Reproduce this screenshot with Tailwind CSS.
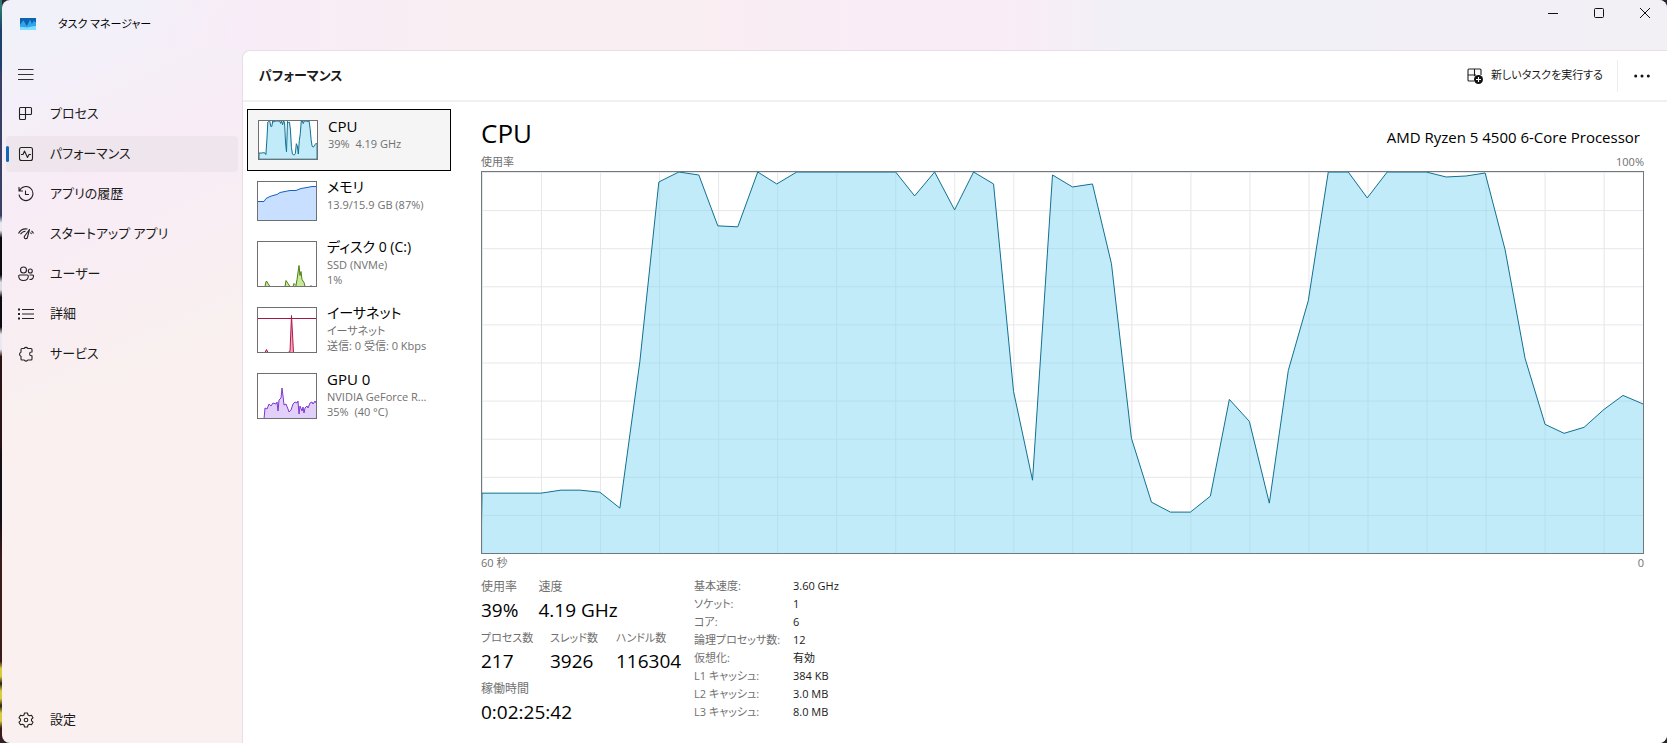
<!DOCTYPE html>
<html lang="ja">
<head>
<meta charset="utf-8">
<meta name="viewport" content="width=device-width, initial-scale=1">
<title>タスク マネージャー</title>
<script src="https://cdn.jsdelivr.net/npm/@tailwindcss/browser@4"></script>
</head>
<body class="h-screen min-h-[700px] flex bg-[#2b2430] text-[#1a1a1a] font-['Open_Sans','Noto_Sans_CJK_JP',sans-serif] [font-feature-settings:'palt']">
<!-- strip of desktop beside the window -->
<div class="w-[2px] shrink-0 bg-[linear-gradient(#2d7a70_0_1%,#1c3f6e_4%_9%,#3a3f66_10%_29%,#e8e8ee_30%_31%,#0b0a10_32%_37%,#dcdce4_38%_39%,#0b0a10_40%_44%,#e8e8ee_45%_47%,#2b1214_48%_60%,#141016_61%_70%,#3d1a1c_75%_89%,#d8cc3c_90%_91%,#2a2214_92%,#d8cc3c_93%_94%,#2a2214_95%,#d8cc3c_96%_97%,#3a1c18_98%)]"></div>
<div class="flex-1 min-w-0 flex flex-col rounded-lg overflow-hidden bg-[linear-gradient(155deg,#f1f1f9_40px,#f8ecf6_200px,#f9f0ef_400px)]">
  <header class="h-[50px] shrink-0 flex items-start justify-between bg-[linear-gradient(90deg,#f8ecf700_8%,#f8ecf7_16%,#f9eef1_30%_40%,#f9ecf6_52%_60%,#f1f0f7_68%,#f2f0f5)]">
    <div class="flex items-center gap-5 pl-4 pt-3">
      <svg class="size-5" viewBox="0 0 20 20" aria-hidden="true"><rect x="2" y="4" width="16" height="12" fill="#0f62b0"/><path d="M2 11l2-3 1.500-1.500L7 9l1.500 3L10 10l2-4.500L14 10l1.500-3L18 8.500V16H2z" fill="#2fa5ee"/><path d="M2 13h3l4 .5 5-1 4-.5v4H2z" fill="#7fdcff"/></svg>
      <h1 class="text-[11px] leading-6 text-black">タスク マネージャー</h1>
    </div>
    <div class="flex">
      <button aria-label="最小化" class="w-[46px] h-[26px] grid place-items-center"><svg class="size-3" viewBox="0 0 12 12" stroke="#111" fill="none"><path d="M1 6.500h10"/></svg></button>
      <button aria-label="最大化" class="w-[46px] h-[26px] grid place-items-center"><svg class="size-3" viewBox="0 0 12 12" stroke="#111" fill="none"><rect x="1.500" y="1.500" width="9" height="9" rx="1"/></svg></button>
      <button aria-label="閉じる" class="w-[45px] h-[26px] grid place-items-center"><svg class="size-3" viewBox="0 0 12 12" stroke="#111" fill="none"><path d="M1 1l10 10M11 1L1 11"/></svg></button>
    </div>
  </header>
  <div class="flex-1 min-h-0 flex">
    <nav class="w-[240px] shrink-0 flex flex-col gap-1 px-1 pt-[6px] pb-[5px] text-[13px]">
      <button aria-label="ナビゲーションを開く" class="h-9 flex items-center pl-3"><svg class="size-4" viewBox="0 0 16 16" stroke="#333" fill="none"><path d="M0 3.500h15.500M0 8.500h15.500M0 13.500h15.500"/></svg></button>
      <a href="#" class="h-9 flex items-center gap-4 pl-3"><svg class="size-4" viewBox="0 0 16 16" stroke="#222" stroke-width="1.100" fill="none"><path d="M2.500 1.500h10a1 1 0 0 1 1 1v5a1 1 0 0 1-1 1H1.500M7.500 1.500v11a1 1 0 0 1-1 1h-4a1 1 0 0 1-1-1v-10a1 1 0 0 1 1-1"/></svg>プロセス</a>
      <a href="#" aria-current="page" class="relative h-9 flex items-center gap-4 pl-3 rounded bg-[#efe5ec]"><span class="absolute left-0 top-[10px] w-[3px] h-4 rounded-full bg-[#0f67b8]"></span><svg class="size-4" viewBox="0 0 16 16" stroke="#222" stroke-width="1.100" fill="none" stroke-linejoin="round"><rect x="1.500" y="1.500" width="13" height="13" rx="2"/><path d="M3 8.500h2l1.500-3.500 3 6.500 1.500-3h2"/></svg>パフォーマンス</a>
      <a href="#" class="h-9 flex items-center gap-4 pl-3"><svg class="size-4" viewBox="0 0 16 16" stroke="#222" stroke-width="1.100" fill="none"><path d="M1 1v4h4M1.500 4.800A7 7 0 1 1 1 8.500M7.500 4.500v4H11"/></svg>アプリの履歴</a>
      <a href="#" class="h-9 flex items-center gap-4 pl-3"><svg class="size-4" viewBox="0 0 16 16" stroke="#222" stroke-width="1.100" fill="none" stroke-linejoin="round"><path d="M.5 7.500A8.500 8.500 0 0 1 9.500 3M2.500 8.200A6 6 0 0 1 7.500 5.200M13.500 4.800A8 8 0 0 1 15.500 7.500M12.500 6.500l1 1.500M11.500 3.500L6.700 10a1.600 1.600 0 1 0 2.700 1.500z"/></svg>スタートアップ アプリ</a>
      <a href="#" class="h-9 flex items-center gap-4 pl-3"><svg class="size-4" viewBox="0 0 16 16" stroke="#222" stroke-width="1.100" fill="none" stroke-linejoin="round"><circle cx="5.500" cy="4" r="3"/><circle cx="12.300" cy="5" r="2"/><path d="M1.700 9h7.600a1 1 0 0 1 1 1c0 3-2 4.500-4.800 4.500S.7 13 .7 10a1 1 0 0 1 1-1zM11.500 9H14.500a1 1 0 0 1 1 1c0 2.500-1.500 3.700-4 3.500"/></svg>ユーザー</a>
      <a href="#" class="h-9 flex items-center gap-4 pl-3"><svg class="size-4" viewBox="0 0 16 16" stroke="#222" stroke-width="1.100" fill="none"><path d="M4 3.500h12M4 8h12M4 12.500h12"/><path d="M0 3.500h2M0 8h2M0 12.500h2" stroke-width="1.800"/></svg>詳細</a>
      <a href="#" class="h-9 flex items-center gap-4 pl-3"><svg class="size-4" viewBox="0 0 16 16" stroke="#222" stroke-width="1.100" fill="none" stroke-linejoin="round"><path d="M4 2.500h2.200a2 2 0 0 1 3.600 0H13a1 1 0 0 1 1 1V6h-.5a1.900 1.900 0 0 0 0 3.800h.5V13a1 1 0 0 1-1 1H9.800a2 2 0 0 1-3.600 0H4a1 1 0 0 1-1-1v-2.700a2.100 2.100 0 0 1 0-4V3.500a1 1 0 0 1 1-1z"/></svg>サービス</a>
      <a href="#" class="mt-auto h-9 flex items-center gap-4 pl-3"><svg class="size-4" viewBox="0 0 16 16" stroke="#222" stroke-width="1.100" fill="none" stroke-linejoin="round"><path d="M6.500 1h3l.5 2 1.500.8 2-.6 1.500 2.600L13.500 7.200v1.600l1.500 1.400-1.500 2.600-2-.6L10 13l-.5 2h-3L6 13l-1.500-.8-2 .6L1 10.200l1.500-1.400V7.200L1 5.800l1.500-2.600 2 .6L6 3z"/><circle cx="8" cy="8" r="1.800"/></svg>設定</a>
    </nav>
    <div class="flex-1 min-w-0 flex flex-col bg-white rounded-tl-lg border-t border-l border-[#e8dfe6]">
      <div class="h-[51px] shrink-0 flex items-center justify-between pl-4 pr-[17px] border-b-2 border-[#f0eff1]">
        <h2 class="text-[13px] font-semibold">パフォーマンス</h2>
        <div class="flex items-center">
          <button class="flex items-center gap-2 text-[11px] pr-[14px]"><svg class="size-4" viewBox="0 0 16 16" stroke="#222" stroke-width="1.100" fill="none"><path d="M14 7V2a1 1 0 0 0-1-1H2a1 1 0 0 0-1 1v10a1 1 0 0 0 1 1h5M7.500 1v7M1 7h8"/><circle cx="11.500" cy="11.500" r="4.500" fill="#111" stroke="none"/><path d="M9 11.500h5M11.500 9v5" stroke="#fff"/></svg>新しいタスクを実行する</button>
          <span class="w-px h-8 bg-[#ececec]"></span>
          <button aria-label="その他" class="pl-4"><svg class="w-4 h-4" viewBox="0 0 16 16" fill="#111"><circle cx="1.700" cy="8" r="1.500"/><circle cx="8" cy="8" r="1.500"/><circle cx="14.300" cy="8" r="1.500"/></svg></button>
        </div>
      </div>
      <div class="flex-1 min-h-0 flex">
        <div class="w-[208px] shrink-0 flex flex-col pl-1 pt-[7px] text-left text-[11px] leading-[15px] text-[#707070]">
          <button class="flex items-start gap-[10px] text-left p-[10px] pr-0 border border-black bg-[#f5f5f5]">
            <svg class="w-[60px] h-10 shrink-0 border border-[#707070] bg-white" viewBox="0 0 1162 382" preserveAspectRatio="none"><use href="#cpu-line" fill="#c2ebfa" stroke="#117090"/></svg>
            <span class="flex flex-col -mt-0.5"><span class="text-[15px] leading-4 mb-0.5 text-black">CPU</span><span>39%&nbsp; 4.19 GHz</span></span>
          </button>
          <button class="flex items-start gap-[10px] text-left py-[10px] pl-[10px]">
            <svg class="w-[60px] h-10 shrink-0 border border-[#707070]" viewBox="0 0 58 38"><path d="M-1 19.500H6l2-3 4-2 3-1 4-1 3-2 5-1 5-1h6l5-2 6-1 5-1h10V40H-1z" fill="#c8dfff" stroke="#1860c0"/></svg>
            <span class="flex flex-col -mt-0.5"><span class="text-sm leading-4 mb-0.5 text-black">メモリ</span><span>13.9/15.9 GB (87%)</span></span>
          </button>
          <button class="flex items-start gap-[10px] text-left py-[10px] pl-[10px]">
            <svg class="w-[60px] h-[46px] shrink-0 border border-[#707070]" viewBox="0 0 58 44"><path d="M-1 44.500H7l1-5h1l1 2 2 3h15l1-6 2 3 2 3h3l1-3 2 2 1-6 2-14 1 10 1-4 1 8 2 3 1 4h5l1-1 1 1h4l1-2V46H-1z" fill="#c8e89c" stroke="#4d8012"/></svg>
            <span class="flex flex-col -mt-0.5"><span class="text-sm leading-4 mb-0.5 text-black">ディスク 0 (C:)</span><span>SSD (NVMe)</span><span>1%</span></span>
          </button>
          <button class="flex items-start gap-[10px] text-left py-[10px] pl-[10px]">
            <svg class="w-[60px] h-[46px] shrink-0 border border-[#707070]" viewBox="0 0 58 44"><path d="M-1 44.500H7l1.500-3 1.500 3h20l2-1 1.500-36 2 37H59" fill="#f5a8bd" stroke="#b01848"/><path d="M0 10.500h58" stroke="#a0184a"/></svg>
            <span class="flex flex-col -mt-0.5"><span class="text-sm leading-4 mb-0.5 text-black">イーサネット</span><span>イーサネット</span><span>送信: 0 受信: 0 Kbps</span></span>
          </button>
          <button class="flex items-start gap-[10px] text-left py-[10px] pl-[10px]">
            <svg class="w-[60px] h-[46px] shrink-0 border border-[#707070]" viewBox="0 0 58 44"><path d="M6 45l1-11 2 1 2-5 2 2 2-3 3 1 1-2 1 9 1-11 2-2 1-10 1 8 1 9 2-1 2 5 1 3 2-2 2-6 2-2 2 1 1-2 1 13 1-8 2 5 1-4 1 6 1-5 2-2 1 2 2-5 2-1 1 2 2-3 1 2 2-2 1 5V46z" fill="#e0d0fa" stroke="#8038d0"/></svg>
            <span class="flex flex-col -mt-0.5"><span class="text-[15px] leading-4 mb-0.5 text-black">GPU 0</span><span>NVIDIA GeForce R...</span><span>35%&nbsp; (40 °C)</span></span>
          </button>
        </div>
        <main class="flex-1 min-w-0 flex flex-col pl-[30px] pr-[23px] pt-[11px] pb-[18px]">
          <div class="flex items-end justify-between text-black">
            <h3 class="text-[26px] leading-10">CPU</h3>
            <p class="text-[15px] leading-8 pr-1">AMD Ryzen 5 4500 6-Core Processor</p>
          </div>
          <div class="flex justify-between text-[11px] leading-[18px] text-[#707070]"><span>使用率</span><span>100%</span></div>
          <svg class="block w-full flex-1 min-h-0 border border-[#707880]" viewBox="0 0 1162 382" preserveAspectRatio="none" role="img" aria-label="CPU 使用率">
            <defs><pattern id="grid" width="59.085" height="38.200" patternUnits="userSpaceOnUse"><path d="M0 .5h60M.5 0v39" stroke="#e6e6e6" fill="none"/></pattern>
            <polygon id="cpu-line" vector-effect="non-scaling-stroke" points="-1,384 0,322 20,322 39,322 59,322 79,319 98,319 118,321 138,337 158,190 177,10 197,0 217,3 236,54 256,55 276,0 295,12 315,0 414,0 433,24 453,0 473,38 492,0 512,12 532,220 551,309 571,3 591,15 611,12 630,92 650,267 670,331 689,341 709,341 729,325 748,228 768,250 788,332 807,199 827,129 847,0 867,0 886,26 906,0 945,0 965,5 985,4 1004,1 1024,78 1044,187 1064,253 1083,262 1103,256 1123,238 1142,224 1163,233 1163,384"/></defs>
            <rect width="1162" height="382" fill="url(#grid)"/>
            <use href="#cpu-line" fill="#85d7f5" fill-opacity=".5" stroke="#117090"/>
          </svg>
          <div class="flex justify-between text-[11px] leading-4 pt-px text-[#707070]"><span>60 秒</span><span>0</span></div>
          <div class="flex gap-[13px] pt-[6px] text-xs text-[#707070]">
            <div class="w-[200px] flex flex-col gap-[5px]">
              <dl class="flex gap-5"><div><dt class="leading-5">使用率</dt><dd class="text-[19px] leading-[26px] text-black">39%</dd></div><div><dt class="leading-5">速度</dt><dd class="text-[19px] leading-[26px] text-black">4.19 GHz</dd></div></dl>
              <dl class="grid grid-cols-[69px_66px_auto]"><div><dt class="text-[11px] leading-5">プロセス数</dt><dd class="text-[19px] leading-[26px] text-black">217</dd></div><div><dt class="text-[11px] leading-5">スレッド数</dt><dd class="text-[19px] leading-[26px] text-black">3926</dd></div><div><dt class="text-[11px] leading-5">ハンドル数</dt><dd class="text-[19px] leading-[26px] text-black">116304</dd></div></dl>
              <dl><dt class="leading-5">稼働時間</dt><dd class="text-[19px] leading-[26px] text-black">0:02:25:42</dd></dl>
            </div>
            <table class="text-left text-[11px] leading-[18px] self-start">
              <tr><th scope="row" class="font-normal w-[99px]">基本速度:</th><td class="text-[#1a1a1a]">3.60 GHz</td></tr>
              <tr><th scope="row" class="font-normal">ソケット:</th><td class="text-[#1a1a1a]">1</td></tr>
              <tr><th scope="row" class="font-normal">コア:</th><td class="text-[#1a1a1a]">6</td></tr>
              <tr><th scope="row" class="font-normal">論理プロセッサ数:</th><td class="text-[#1a1a1a]">12</td></tr>
              <tr><th scope="row" class="font-normal">仮想化:</th><td class="text-[#1a1a1a]">有効</td></tr>
              <tr><th scope="row" class="font-normal">L1 キャッシュ:</th><td class="text-[#1a1a1a]">384 KB</td></tr>
              <tr><th scope="row" class="font-normal">L2 キャッシュ:</th><td class="text-[#1a1a1a]">3.0 MB</td></tr>
              <tr><th scope="row" class="font-normal">L3 キャッシュ:</th><td class="text-[#1a1a1a]">8.0 MB</td></tr>
            </table>
          </div>
        </main>
      </div>
    </div>
  </div>
</div>
</body>
</html>
